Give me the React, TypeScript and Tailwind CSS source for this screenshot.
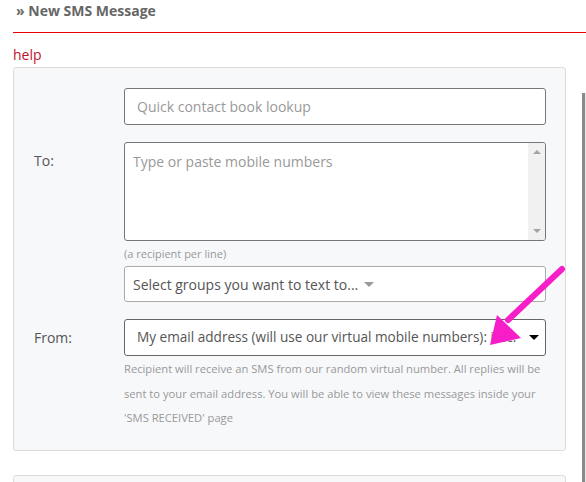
export default function App() {
  return (
    <div className="relative w-[586px] h-[482px] overflow-hidden bg-white font-['Open_Sans',sans-serif]">
      {/* header */}
      <div className="ml-[13px] h-[33px] border-b border-[#e60000] pl-[3px] pt-[1px] text-[14px] font-bold leading-[20px] text-[#666]">
        » New SMS Message
      </div>

      <div className="flex">
        <div className="ml-[13px] w-[553px] shrink-0">
          <div className="mt-[12px] text-[14px] leading-[20px] text-[#c0102a]">help</div>

          <div className="mt-[2px] rounded-[3px] border border-[#dcdcdc] bg-[#f7f8fa] pl-[20px] pt-[20px] pb-[19px]">
            {/* contact lookup */}
            <div className="flex">
              <div className="w-[90px] shrink-0" />
              <div className="flex h-[37px] w-[422px] items-center rounded-[3px] border border-[#777] bg-white pl-[12px] text-[14px] text-[#999]">
                Quick contact book lookup
              </div>
            </div>

            {/* to */}
            <div className="mt-[17px] flex">
              <div className="w-[90px] shrink-0 pt-[9px] text-[14px] leading-[20px] text-[#555]">To:</div>
              <div className="w-[422px]">
                <div className="flex h-[99px] rounded-[3px] border border-[#777] bg-white">
                  <div className="flex-1 pl-[8px] pt-[9px] text-[14px] leading-[20px] text-[#999]">
                    Type or paste mobile numbers
                  </div>
                  <div className="flex w-[17px] flex-col items-center justify-between rounded-r-[2px] bg-[#f1f1f1] py-[7px]">
                    <span className="h-0 w-0 border-x-[4px] border-b-[4px] border-x-transparent border-b-[#a3a3a3]" />
                    <span className="h-0 w-0 border-x-[4px] border-t-[4px] border-x-transparent border-t-[#a3a3a3]" />
                  </div>
                </div>
                <div className="mt-[6px] text-[11px] leading-[14px] text-[#999]">(a recipient per line)</div>
                <div className="mt-[5px] flex h-[36px] items-center gap-[6px] rounded-[3px] border border-[#aaa] bg-white pl-[8px] text-[14px] text-[#555]">
                  Select groups you want to text to...
                  <span className="h-0 w-0 border-x-[5px] border-t-[5px] border-x-transparent border-t-[#999]" />
                </div>
              </div>
            </div>

            {/* from */}
            <div className="mt-[17px] flex">
              <div className="flex h-[37px] w-[90px] shrink-0 items-center text-[14px] text-[#555]">From:</div>
              <div className="w-[422px]">
                <div className="flex h-[37px] items-center rounded-[3px] border border-[#666] bg-white pl-[12px] pr-[6px] text-[13.6px] text-[#555]">
                  <span className="min-w-0 flex-1 overflow-hidden whitespace-nowrap">
                    My email address (will use our virtual mobile numbers): itac.
                  </span>
                  <span className="ml-[4px] h-0 w-0 shrink-0 border-x-[5px] border-t-[5px] border-x-transparent border-t-black" />
                </div>
                <p className="mt-[1px] text-[11.2px] leading-[24.5px] text-[#999]">
                  Recipient will receive an SMS from our random virtual number. All replies will be sent to your email address. You will be able to view these messages inside your 'SMS RECEIVED' page
                </p>
              </div>
            </div>
          </div>

          <div className="mt-[24px] h-[40px] rounded-[3px] border border-[#dcdcdc] bg-[#f7f8fa]" />
        </div>

        {/* edge of the neighbouring panel */}
        <div className="ml-[16px] mt-[60px] h-[400px] w-[4px] shrink-0 border-l-[3px] border-[#8a8a8a] bg-[#e6e6e6]" />
      </div>

      {/* annotation arrow */}
      <svg className="pointer-events-none absolute left-0 top-0" width="586" height="482">
        <line x1="562" y1="269" x2="508" y2="320" stroke="#f71dc8" strokeWidth="6" strokeLinecap="round" />
        <polygon points="490,345 497,315 521,338" fill="#f71dc8" />
      </svg>
    </div>
  )
}
